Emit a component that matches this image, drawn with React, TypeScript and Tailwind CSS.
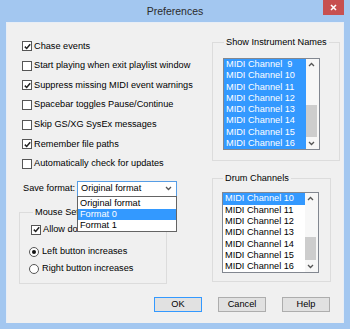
import React from 'react';

const font = { fontFamily: '"Liberation Sans", Arial, sans-serif' };

function CheckMark() {
  return (
    <svg width="7" height="7" viewBox="0 0 7 7">
      <path d="M0.8 3.6 L2.7 5.5 L6.2 1.2" stroke="#222" strokeWidth="1.5" fill="none" />
    </svg>
  );
}

function Check({ label, checked }: { label: string; checked?: boolean }) {
  return (
    <div className="flex items-center gap-[2px] whitespace-nowrap">
      <span className="w-[10px] h-[10px] border border-[#555] bg-white flex items-center justify-center shrink-0">
        {checked && <CheckMark />}
      </span>
      <span>{label}</span>
    </div>
  );
}

function Radio({ label, checked }: { label: string; checked?: boolean }) {
  return (
    <div className="flex items-center gap-[3px] h-[11px] whitespace-nowrap">
      <span className="w-[10px] h-[10px] rounded-full border border-[#555] bg-white flex items-center justify-center shrink-0">
        {checked && <span className="w-[4px] h-[4px] rounded-full bg-[#111]" />}
      </span>
      <span>{label}</span>
    </div>
  );
}

function Chevron({ up }: { up?: boolean }) {
  return (
    <svg width="7" height="5" viewBox="0 0 7 5">
      <path d={up ? 'M1 4 L3.5 1.5 L6 4' : 'M1 1 L3.5 3.5 L6 1'} stroke="#555" strokeWidth="1.3" fill="none" />
    </svg>
  );
}

function ListBox({
  items,
  selected,
  thumbTop,
  thumbHeight,
}: {
  items: string[];
  selected: number[];
  thumbTop: number;
  thumbHeight: number;
}) {
  return (
    <div className="w-[97px] border border-[#828790] bg-white flex">
      <div className="flex-1 flex flex-col">
        {items.map((it, i) => (
          <div
            key={it}
            className={`h-[11.3px] leading-[11.3px] pl-[2px] whitespace-pre ${
              selected.includes(i) ? 'bg-[#3399ff] text-white' : 'text-black'
            }`}
          >
            {it}
          </div>
        ))}
      </div>
      <div className="w-[13px] flex flex-col bg-[#f7f7f7] pr-[2px]">
        <div className="h-[11px] flex items-center justify-center">
          <Chevron up />
        </div>
        <div className="flex-1" style={{ paddingTop: thumbTop }}>
          <div className="bg-[#cdcdcd]" style={{ height: thumbHeight }} />
        </div>
        <div className="h-[11px] flex items-center justify-center">
          <Chevron />
        </div>
      </div>
    </div>
  );
}

export default function App() {
  const names = [9, 10, 11, 12, 13, 14, 15, 16].map((n) => `MIDI Channel ${n < 10 ? ' ' : ''}${n}`);
  const drums = [10, 11, 12, 13, 14, 15, 16].map((n) => `MIDI Channel ${n}`);

  return (
    <div className="w-[350px] h-[329px] bg-[#a3c7f0] flex flex-col text-[9.2px] leading-[11px] text-black" style={font}>
      {/* title bar */}
      <div className="h-[22px] grid grid-cols-[1fr_auto_1fr] items-start">
        <div />
        <div className="pt-[5px] text-[10.5px] leading-[12px] text-[#2b2b2b]">Preferences</div>
        <div className="flex justify-end pr-[6px]">
          <div className="w-[21px] h-[15px] bg-[#c75050] flex items-center justify-center">
            <svg width="7" height="7" viewBox="0 0 7 7">
              <path d="M1 1 L6 6 M6 1 L1 6" stroke="#fff" strokeWidth="1.6" />
            </svg>
          </div>
        </div>
      </div>

      {/* client area */}
      <div className="mx-[6px] h-[301px] bg-[#f0f0f0] border-t border-x border-[#e8eef6] flex flex-col">
        <div className="flex">
          {/* left column */}
          <div className="flex-1 pl-[12px] pt-[13.2px]">
            <div className="pl-[3px]">
              {[
                ['Chase events', true],
                ['Start playing when exit playlist window', false],
                ['Suppress missing MIDI event warnings', true],
                ['Spacebar toggles Pause/Continue', false],
                ['Skip GS/XG SysEx messages', false],
                ['Remember file paths', true],
                ['Automatically check for updates', false],
              ].map(([l, c]) => (
                <div key={l as string} className="h-[19.67px] flex items-center">
                  <Check label={l as string} checked={c as boolean} />
                </div>
              ))}
            </div>

            <div className="mt-[7px] pl-[4px] flex items-center h-[16px]">
              <span className="w-[54px]">Save format:</span>
              <div className="relative w-[100px] h-[16px] border border-[#569de5] bg-white flex items-center justify-between pl-[3px] pr-[4px]">
                <span>Original format</span>
                <Chevron />
                <div className="absolute left-[-1px] right-[-1px] top-full z-10 bg-white border border-[#646464] pt-[1px]">
                  <div className="h-[11px] pl-[2px]">Original format</div>
                  <div className="h-[11px] pl-[2px] bg-[#3399ff] text-white">Format 0</div>
                  <div className="h-[11px] pl-[2px]">Format 1</div>
                </div>
              </div>
            </div>

            <fieldset className="mt-[10.5px] w-[148px] border border-[#dcdcdc] px-[9px] pb-[8.5px]">
              <legend className="ml-[4px] px-[2px] whitespace-nowrap">Mouse Settings</legend>
              <div className="mt-[6px] pl-[2px] h-[11px] flex items-center">
                <Check label="Allow double-click" checked />
              </div>
              <div className="mt-[11px]">
                <Radio label="Left button increases" checked />
              </div>
              <div className="mt-[6px]">
                <Radio label="Right button increases" />
              </div>
            </fieldset>
          </div>

          {/* right column */}
          <div className="w-[119px] mr-[12px] pt-[13.5px]">
            <fieldset className="border border-[#dcdcdc] px-[10px] pb-[10px]">
              <legend className="ml-[1px] px-[2px] whitespace-nowrap">Show Instrument Names</legend>
              <div className="mt-[10.5px]">
                <ListBox items={names} selected={[0, 1, 2, 3, 4, 5, 6, 7]} thumbTop={35} thumbHeight={32} />
              </div>
            </fieldset>
            <fieldset className="mt-[11.5px] border border-[#dcdcdc] px-[9px] pb-[8px]">
              <legend className="ml-[1px] px-[2px] whitespace-nowrap">Drum Channels</legend>
              <div className="mt-[8.5px]">
                <ListBox items={drums} selected={[0]} thumbTop={33} thumbHeight={23} />
              </div>
            </fieldset>
          </div>
        </div>

        {/* buttons */}
        <div className="mt-auto mb-[11px] flex justify-end gap-[16px] pr-[13px]">
          <button className="w-[48px] h-[15px] bg-[#e1e1e1] border border-[#3399ff] leading-[13px]">OK</button>
          <button className="w-[48px] h-[15px] bg-[#e1e1e1] border border-[#adadad] leading-[13px]">Cancel</button>
          <button className="w-[48px] h-[15px] bg-[#e1e1e1] border border-[#adadad] leading-[13px]">Help</button>
        </div>
      </div>
    </div>
  );
}
